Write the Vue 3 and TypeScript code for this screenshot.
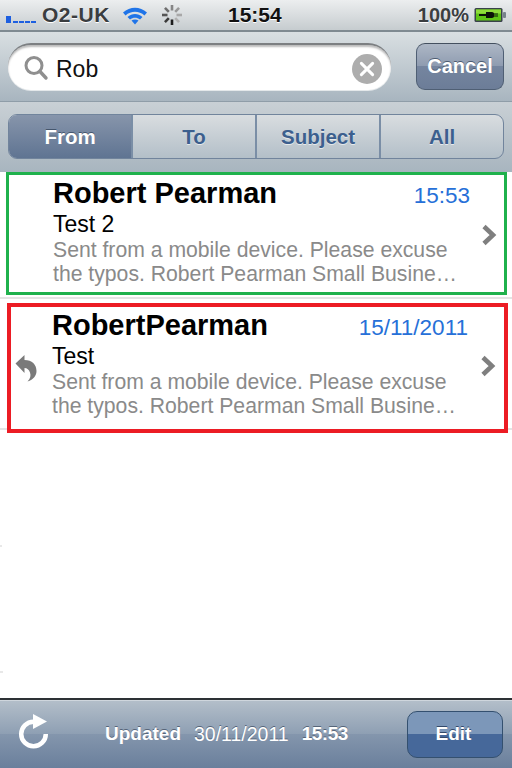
<template>
  <div class="phone">
    <div class="status">
      <div class="signal"><i class="on"></i><i></i><i></i><i></i><i></i></div>
      <span class="carrier">O2-UK</span>
      <svg class="wifi" width="26" height="20" viewBox="0 0 26 20">
        <path d="M1 7.500C8 1 18 1 25 7.500L22.500 10.500C17 5.500 9 5.500 3.500 10.500Z" fill="#1f74e8" />
        <path d="M5.500 12C10 8 16 8 20.500 12L18 14.500C15 12 11 12 8 14.500Z" fill="#1f74e8" />
        <path d="M9.500 15.500C11.500 14 14.500 14 16.500 15.500L13 19.500Z" fill="#1f74e8" />
      </svg>
      <svg class="spin" width="24" height="24" viewBox="0 0 24 24">
        <line
          v-for="s in spokes"
          :key="s.a"
          x1="12"
          y1="2"
          x2="12"
          y2="7.500"
          stroke-width="2.600"
          :stroke="s.c"
          :transform="`rotate(${s.a} 12 12)`"
        />
      </svg>
      <span class="clock">15:54</span>
      <span class="pct">100%</span>
      <svg class="batt" width="33" height="16" viewBox="0 0 33 16">
        <rect x="0.500" y="1" width="28" height="14" rx="1.500" fill="#39424a" />
        <rect x="2" y="2.500" width="25" height="11" fill="#5fc416" />
        <rect x="2" y="2.500" width="25" height="4" fill="#8fdc3a" />
        <rect x="29" y="5" width="3" height="6" rx="1" fill="#77838a" />
        <path d="M5 7H12V5H18C19 5 20 6 20 6.500H24V7.500H20V8.500H24V9.500H20C20 10 19 11 18 11H12V9H5Z" fill="#0c1208" />
      </svg>
    </div>

    <div class="searchbar">
      <div class="field">
        <svg width="26" height="28" viewBox="0 0 26 28">
          <circle cx="11" cy="11.500" r="8" fill="none" stroke="#8f8f8f" stroke-width="3" />
          <line x1="17" y1="17.500" x2="23" y2="24" stroke="#8f8f8f" stroke-width="3.400" stroke-linecap="round" />
        </svg>
        <span class="query">Rob</span>
        <svg class="clear" width="30" height="30" viewBox="0 0 32 32">
          <circle cx="16" cy="16" r="16" fill="#adadad" />
          <path d="M10 10L22 22M22 10L10 22" stroke="#fff" stroke-width="3.200" stroke-linecap="round" />
        </svg>
      </div>
      <button class="cancel">Cancel</button>
    </div>

    <div class="scope">
      <div class="segs">
        <div
          v-for="t in tabs"
          :key="t"
          class="seg"
          :class="{ active: t === 'From' }"
        >
          {{ t }}
        </div>
      </div>
    </div>

    <div class="list">
      <div v-for="m in mails" :key="m.id" class="mail" :class="m.cls">
        <div class="lead">
          <svg v-if="m.replied" width="22" height="28" viewBox="0 0 22 28">
            <path d="M0.500 9.500L9.500 1V6C17 6 21.500 10.500 21.500 17C21.500 21.500 18.500 25.500 12.500 27.500C15.500 24.500 16 21.500 15 18.500C14 15.500 12 14 9.500 14V19Z" fill="#7a7a7a" />
          </svg>
        </div>
        <div class="body">
          <div class="top">
            <span class="from">{{ m.from }}</span>
            <span class="date">{{ m.date }}</span>
          </div>
          <div class="subject">{{ m.subject }}</div>
          <div class="preview">Sent from a mobile device. Please excuse</div>
          <div class="preview">the typos. Robert Pearman Small Busine…</div>
        </div>
        <svg class="chev" width="16" height="22" viewBox="0 0 16 22">
          <path d="M3 2.500L12 11L3 19.500" fill="none" stroke="#7f7f7f" stroke-width="4.600" />
        </svg>
      </div>
    </div>

    <div class="toolbar">
      <svg class="refresh" width="32" height="40" viewBox="0 0 32 40">
        <path d="M27.800 21A12.300 12.300 0 1 1 15.500 8.700" fill="none" stroke="#fff" stroke-width="4.500" />
        <path d="M15 1L29 8.500L15 16Z" fill="#fff" />
      </svg>
      <div class="updated">
        <b>Updated</b><span>30/11/2011</span><b class="time">15:53</b>
      </div>
      <button class="edit">Edit</button>
    </div>
  </div>
</template>

<script setup lang="ts">
interface Mail {
  id: number;
  cls: string;
  from: string;
  date: string;
  subject: string;
  replied: boolean;
}

const tabs = ["From", "To", "Subject", "All"];

const mails: Mail[] = [
  { id: 1, cls: "green", from: "Robert Pearman", date: "15:53", subject: "Test 2", replied: false },
  { id: 2, cls: "red", from: "RobertPearman", date: "15/11/2011", subject: "Test", replied: true },
];

const shades = ["#1c1c1c", "#3a3a3a", "#555", "#6e6e6e", "#858585", "#999", "#a8a8a8", "#b0b0b0"];
const spokes = shades.map((c, i) => ({ a: 180 + i * 45, c }));
</script>

<style>
html,
body {
  margin: 0;
  background: #fff;
}
</style>

<style scoped>
.phone {
  width: 512px;
  height: 768px;
  display: flex;
  flex-direction: column;
  overflow: hidden;
  font-family: "Liberation Sans", Arial, sans-serif;
  background: #fff;
}

.status {
  height: 32px;
  box-sizing: border-box;
  flex: none;
  display: flex;
  align-items: center;
  background: linear-gradient(#eceeef, #c6cccf);
  border-bottom: 2px solid #7f8a91;
  color: #3a3d40;
  position: relative;
}
.signal {
  display: flex;
  align-items: flex-end;
  gap: 1px;
  margin-left: 6px;
  height: 10px;
  margin-top: 6px;
}
.signal i {
  width: 5px;
  height: 2px;
  background: #1d5fe0;
}
.signal i.on {
  height: 7px;
  margin-right: 1px;
}
.carrier {
  font-size: 21px;
  font-weight: bold;
  margin-left: 6px;
  letter-spacing: 0.5px;
  text-shadow: 0 1px 0 #fff;
}
.wifi {
  margin-left: 12px;
}
.spin {
  margin-left: 12px;
}
.clock {
  position: absolute;
  left: 228px;
  font-size: 21px;
  font-weight: bold;
  color: #111;
  text-shadow: 0 1px 0 #fff;
}
.pct {
  margin-left: auto;
  font-size: 20px;
  font-weight: bold;
  text-shadow: 0 1px 0 #fff;
}
.batt {
  margin: 0 5px 0 5px;
}

.searchbar {
  height: 70px;
  box-sizing: border-box;
  flex: none;
  display: flex;
  align-items: flex-start;
  padding: 11px 8px 0;
  background: linear-gradient(#d9dfe2, #a8b5bf);
  border-bottom: 1px solid #8f9da8;
}
.field {
  width: 383px;
  height: 47px;
  box-sizing: border-box;
  display: flex;
  align-items: center;
  padding: 0 9px 0 15px;
  background: #fff;
  border-radius: 23px;
  border-top: 2px solid #7c7f82;
  box-shadow: inset 0 2px 2px #bbb, 0 1px 0 #e4e8ea;
}
.query {
  font-size: 23px;
  color: #111;
  margin: 4px 0 0 7px;
}
.clear {
  margin: 2px 0 0 auto;
}
.cancel {
  margin-left: 25px;
  width: 88px;
  height: 47px;
  padding: 0;
  border-radius: 9px;
  border: 1px solid #4f5f74;
  border-top-color: #44505f;
  background: linear-gradient(#adb7c5, #8e9bb0 50%, #75859f 50%, #6c7d98);
  color: #fff;
  font: bold 20px "Liberation Sans", Arial, sans-serif;
  text-shadow: 0 -1px 0 #4c5b70;
}

.scope {
  height: 70px;
  box-sizing: border-box;
  flex: none;
  padding: 12px 8px 13px;
  background: linear-gradient(#c9d0d5, #a8b5bf);
}
.segs {
  display: flex;
  height: 45px;
  box-sizing: border-box;
  border: 1px solid #71849c;
  border-radius: 9px;
  overflow: hidden;
  background: linear-gradient(#d9dde0, #b3bfc8);
}
.seg {
  flex: 1;
  display: flex;
  align-items: center;
  justify-content: center;
  border-right: 2px solid #7a8ea6;
  color: #3c5f8e;
  font-size: 20.500px;
  font-weight: bold;
  text-shadow: 0 1px 0 #e6eaec;
}
.seg:last-child {
  border-right: 0;
}
.seg.active {
  background: linear-gradient(#8795ab, #5f7492);
  color: #fff;
  text-shadow: 0 -1px 0 #45566d;
}

.list {
  flex: 1;
  display: flex;
  flex-direction: column;
  background:
    linear-gradient(#e4e4e4, #e4e4e4) 0 125px / 100% 2px no-repeat,
    linear-gradient(#e4e4e4, #e4e4e4) 0 256px / 100% 2px no-repeat,
    linear-gradient(#e8e8e8, #e8e8e8) 0 373px / 2px 2px no-repeat,
    linear-gradient(#e8e8e8, #e8e8e8) 0 499px / 3px 2px no-repeat;
}
.mail {
  box-sizing: border-box;
  display: flex;
  align-items: stretch;
  background: #fff;
}
.green {
  width: 501px;
  height: 123px;
  margin-left: 6px;
  border: 3px solid #1fb14c;
}
.red {
  width: 501px;
  height: 130px;
  margin: 8px 0 0 7px;
  border: 4px solid #ec1c24;
}
.lead {
  width: 44px;
  flex: none;
  display: flex;
  align-items: center;
  padding-left: 4px;
  box-sizing: border-box;
}
.red .lead {
  width: 41px;
}
.body {
  flex: 1;
  min-width: 0;
  padding-top: 1px;
}
.top {
  display: flex;
  align-items: baseline;
  justify-content: space-between;
  height: 34px;
  line-height: 34px;
}
.from {
  font-size: 29px;
  font-weight: bold;
  color: #000;
}
.date {
  font-size: 22.500px;
  color: #2670d8;
}
.subject {
  font-size: 23px;
  color: #000;
  line-height: 28px;
}
.preview {
  font-size: 21.200px;
  line-height: 24px;
  color: #8a8a8a;
  white-space: nowrap;
}
.chev {
  flex: none;
  align-self: center;
  margin: 2px 7px 0 11px;
}
.red .chev {
  margin: -4px 8px 0 12px;
}

.toolbar {
  height: 70px;
  box-sizing: border-box;
  flex: none;
  display: flex;
  align-items: center;
  padding: 0 9px 0 18px;
  border-top: 2px solid #2d3135;
  box-shadow: inset 0 1px 0 #cfd6dd;
  background: linear-gradient(#b4bfca 0, #8e9fb3 50%, #8496ad 50%, #6a7f9c 100%);
  color: #fff;
}
.refresh {
  margin-top: -3px;
}
.updated {
  margin-left: 55px;
  font-size: 19.500px;
  display: flex;
  gap: 13px;
  text-shadow: 0 -1px 0 #566579;
}
.updated b {
  font-size: 19px;
}
.updated .time {
  letter-spacing: -0.5px;
}
.edit {
  margin-left: auto;
  width: 96px;
  height: 47px;
  padding: 0 3px 0 0;
  border-radius: 10px;
  border: 1px solid #34506f;
  background: linear-gradient(#7c97b9 0 50%, #46689a 50% 100%);
  color: #fff;
  font: bold 19px "Liberation Sans", Arial, sans-serif;
  text-shadow: 0 -1px 0 #33496a;
}
</style>
